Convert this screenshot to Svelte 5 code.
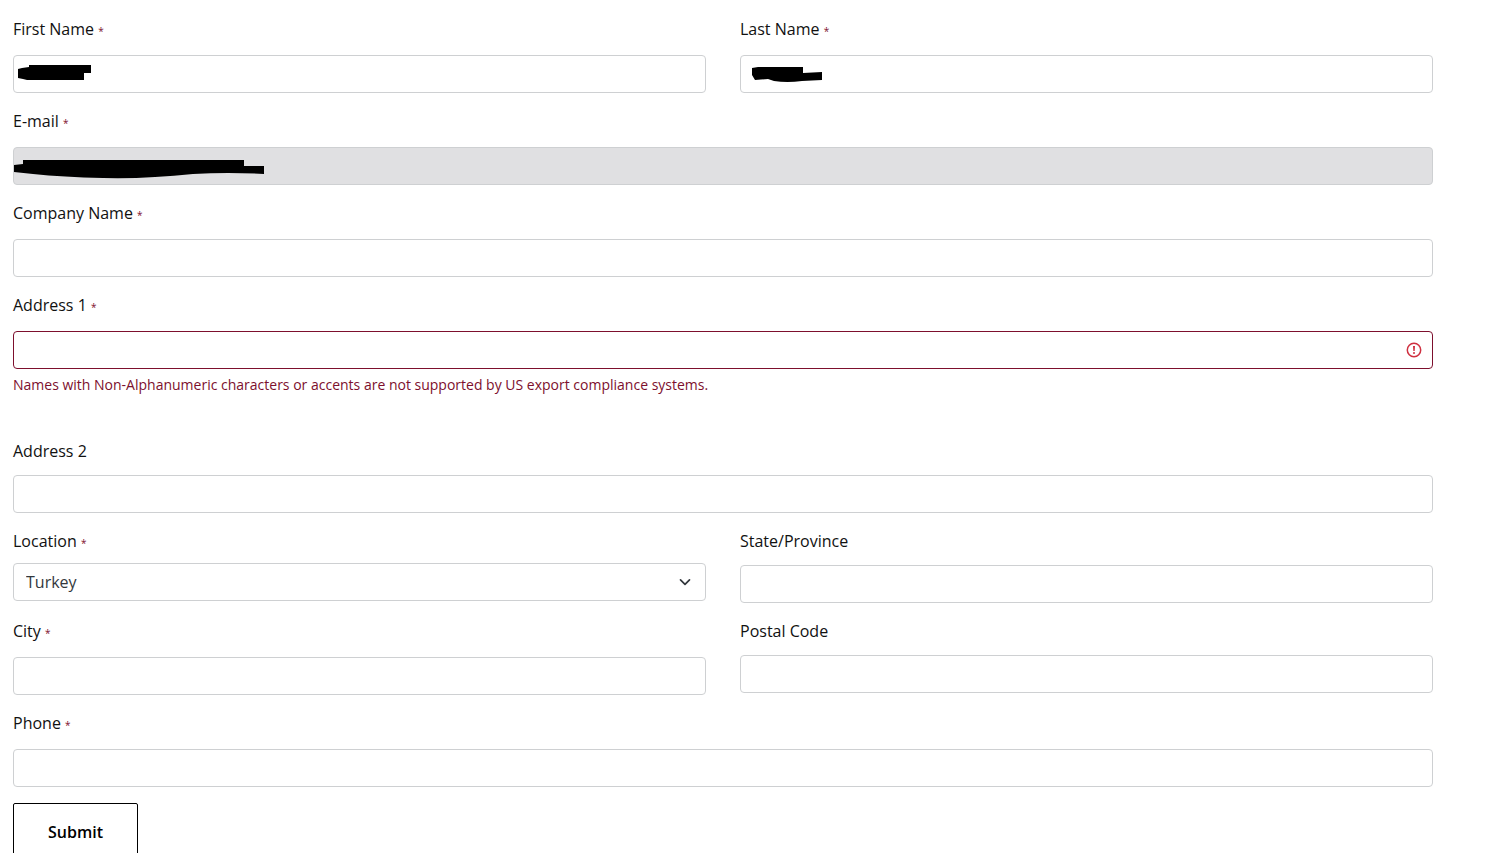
<script lang="ts">
  let form = $state({
    firstName: '',
    lastName: '',
    email: '',
    company: '',
    address1: '',
    address2: '',
    location: 'Turkey',
    province: '',
    city: '',
    postalCode: '',
    phone: ''
  });

  const countries = ['Germany', 'Turkey', 'United Kingdom', 'United States'];

  function submit(event: SubmitEvent) {
    event.preventDefault();
  }
</script>

{#snippet label(id: string, text: string, required: boolean)}
  <label for={id} class:required>
    {text}
    {#if required}<span class="star">*</span>{/if}
  </label>
{/snippet}

<form class="profile-form" novalidate onsubmit={submit}>
  <div class="row">
    <div class="field">
      {@render label('first-name', 'First Name', true)}
      <div class="control">
        <input id="first-name" type="text" bind:value={form.firstName} />
        <svg class="scribble" width="100" height="38" viewBox="0 0 100 38" aria-hidden="true">
          <path d="M5 14L9 13L16 12V10H78V18H71V25H14L10 24L5 23Z" />
        </svg>
      </div>
    </div>
    <div class="field">
      {@render label('last-name', 'Last Name', true)}
      <div class="control">
        <input id="last-name" type="text" bind:value={form.lastName} />
        <svg class="scribble" width="100" height="38" viewBox="0 0 100 38" aria-hidden="true">
          <path d="M12 13L18 12H63V18L82 17V25L62 26Q47 28 34 26L28 24L15 25L12 20Z" />
        </svg>
      </div>
    </div>
  </div>

  <div class="field">
    {@render label('email', 'E-mail', true)}
    <div class="control">
      <input id="email" type="email" disabled bind:value={form.email} />
      <svg class="scribble" width="270" height="38" viewBox="0 0 270 38" aria-hidden="true">
        <path d="M1 18L10 17V13H231V19H251V27Q215 25 180 27Q134 32 90 31Q50 30 20 27L1 25Z" />
      </svg>
    </div>
  </div>

  <div class="field">
    {@render label('company', 'Company Name', true)}
    <input id="company" type="text" bind:value={form.company} />
  </div>

  <div class="field">
    {@render label('address1', 'Address 1', true)}
    <div class="control">
      <input
        id="address1"
        class="invalid"
        type="text"
        aria-invalid="true"
        aria-describedby="address1-error"
        bind:value={form.address1}
      />
      <svg class="alert" width="16" height="16" viewBox="0 0 16 16" aria-hidden="true">
        <circle cx="8" cy="8" r="6.7" fill="none" stroke="currentColor" stroke-width="1.5" />
        <path d="M7 4H9L8.7 9H7.3Z" fill="currentColor" />
        <circle cx="8" cy="11" r="1" fill="currentColor" />
      </svg>
    </div>
    <p id="address1-error" class="error">
      Names with Non-Alphanumeric characters or accents are not supported by US export compliance systems.
    </p>
  </div>

  <div class="field">
    {@render label('address2', 'Address 2', false)}
    <input id="address2" type="text" bind:value={form.address2} />
  </div>

  <div class="row">
    <div class="field select-field">
      {@render label('location', 'Location', true)}
      <div class="control">
        <select id="location" bind:value={form.location}>
          {#each countries as country}
            <option value={country}>{country}</option>
          {/each}
        </select>
        <svg class="chevron" width="16" height="16" viewBox="0 0 16 16" aria-hidden="true">
          <path d="M3.5 5.8L8 10.3L12.5 5.8" />
        </svg>
      </div>
    </div>
    <div class="field">
      {@render label('province', 'State/Province', false)}
      <input id="province" type="text" bind:value={form.province} />
    </div>
  </div>

  <div class="row">
    <div class="field">
      {@render label('city', 'City', true)}
      <input id="city" type="text" bind:value={form.city} />
    </div>
    <div class="field">
      {@render label('postal-code', 'Postal Code', false)}
      <input id="postal-code" type="text" bind:value={form.postalCode} />
    </div>
  </div>

  <div class="field">
    {@render label('phone', 'Phone', true)}
    <input id="phone" type="tel" bind:value={form.phone} />
  </div>

  <button type="submit">Submit</button>
</form>

<style>
  :global(body) {
    margin: 0;
    background: #fff;
  }

  .profile-form {
    display: flex;
    flex-direction: column;
    gap: 16px;
    padding: 17px 57px 0 13px;
    font-family: 'Open Sans', 'Noto Sans', sans-serif;
    font-size: 16px;
    line-height: 24px;
    color: #111;
  }

  .row {
    display: grid;
    grid-template-columns: 1fr 1fr;
    align-items: start;
    gap: 34px;
  }

  .field {
    display: flex;
    flex-direction: column;
  }

  label {
    margin-bottom: 12px;
  }

  label.required {
    margin-bottom: 14px;
  }

  .select-field label.required {
    margin-bottom: 10px;
  }

  .star {
    font-size: 10px;
    line-height: 10px;
    color: #7d0f2d;
  }

  .control {
    position: relative;
    display: flex;
  }

  input,
  select {
    box-sizing: border-box;
    width: 100%;
    height: 38px;
    padding: 6px 12px;
    border: 1px solid #ced0d2;
    border-radius: 4px;
    background: #fff;
    font: inherit;
    color: #33383d;
  }

  select {
    appearance: none;
    padding-right: 36px;
  }

  input:focus,
  select:focus {
    outline: none;
    border-color: #6b7075;
  }

  input:disabled {
    background: #e0e0e2;
  }

  input.invalid {
    padding-right: 36px;
    border-color: #7d0f2d;
  }

  .scribble {
    position: absolute;
    top: 0;
    left: 0;
    fill: #000;
    pointer-events: none;
  }

  .alert {
    position: absolute;
    top: 11px;
    right: 11px;
    color: #cf3040;
    pointer-events: none;
  }

  .chevron {
    position: absolute;
    top: 11px;
    right: 13px;
    fill: none;
    stroke: #33383d;
    stroke-width: 1.7;
    stroke-linecap: round;
    stroke-linejoin: round;
    pointer-events: none;
  }

  .error {
    margin: 6px 0 28px;
    font-size: 14px;
    line-height: 20px;
    color: #7d0f2d;
  }

  button {
    align-self: flex-start;
    padding: 16px 34px;
    border: 1px solid #000;
    border-radius: 2px;
    background: #fff;
    font: inherit;
    font-weight: 600;
    color: #000;
    cursor: pointer;
  }
</style>
